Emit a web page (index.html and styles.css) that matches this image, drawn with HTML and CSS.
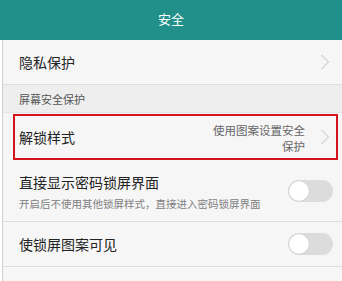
FILE: index.html
```html
<!DOCTYPE html>
<html lang="zh-CN">
<head>
  <meta charset="UTF-8">
  <title>安全</title>
  <link rel="stylesheet" href="styles.css">
</head>
<body>
  <div class="header">安全</div>
  <div class="list">
    <div class="row">
      <span class="title">隐私保护</span>
      <svg class="chevron" width="10" height="16" viewBox="0 0 10 16"><polyline points="1.5,1 8.5,8 1.5,15" fill="none" stroke="#bdbdbd" stroke-width="1"/></svg>
    </div>
    <div class="section">屏幕安全保护</div>
    <div class="row row-mark">
      <span class="title">解锁样式</span>
      <span class="value">使用图案设置安全<br>保护</span>
      <svg class="chevron" width="10" height="16" viewBox="0 0 10 16"><polyline points="1.5,1 8.5,8 1.5,15" fill="none" stroke="#bdbdbd" stroke-width="1"/></svg>
    </div>
    <div class="row row-tall">
      <div class="text">
        <div class="title">直接显示密码锁屏界面</div>
        <div class="sub">开启后不使用其他锁屏样式，直接进入密码锁屏界面</div>
      </div>
      <span class="switch"></span>
    </div>
    <div class="row">
      <span class="title">使锁屏图案可见</span>
      <span class="switch"></span>
    </div>
  </div>
</body>
</html>
```

FILE: styles.css
```css
body {
  margin: 0;
  width: 342px;
  height: 281px;
  overflow: hidden;
  background: #fff;
  font-family: "Noto Sans CJK SC", "Noto Sans", sans-serif;
  color: #222;
}
.header {
  height: 40px;
  line-height: 38px;
  background: #21908b;
  color: #fff;
  font-size: 13px;
  text-align: center;
}
.list {
  margin-left: 2px;
  border-left: 1px solid #cfcfcf;
  background: #f6f6f6;
  height: 241px;
}
.row {
  position: relative;
  display: flex;
  align-items: center;
  height: 45px;
  padding: 0 11px 0 16px;
  border-bottom: 1px solid #dedede;
  box-sizing: border-box;
}
.title {
  font-size: 14px;
  flex: 1;
}
.chevron {
  display: block;
  margin-right: 1px;
}
.section {
  height: 28px;
  line-height: 28px;
  padding-left: 16px;
  background: #eeeeee;
  font-size: 11px;
  color: #555;
  border-bottom: 1px solid #e4e4e4;
  box-sizing: border-box;
}
.row-mark {
  height: 47px;
  border-bottom: none;
}
.row-mark::after {
  content: "";
  position: absolute;
  left: 10px;
  right: 4px;
  top: 1px;
  bottom: 0;
  border: 2px solid #d2131c;
}
.value {
  font-size: 11.5px;
  line-height: 16px;
  color: #666;
  text-align: right;
  margin-right: 15px;
  margin-top: 2px;
}
.row-tall {
  height: 62px;
}
.text {
  flex: 1;
}
.row-tall .title {
  margin-top: 2px;
}
.sub {
  font-size: 10.5px;
  color: #808080;
  margin-top: 4px;
}
.switch {
  position: relative;
  width: 45px;
  height: 22px;
  border-radius: 11px;
  background: #dcdcdc;
  margin-right: -2px;
}
.switch::before {
  content: "";
  position: absolute;
  left: 1px;
  top: 1px;
  width: 20px;
  height: 20px;
  border-radius: 50%;
  background: #fff;
  box-shadow: 0 0 1px rgba(0,0,0,0.25);
}
```
